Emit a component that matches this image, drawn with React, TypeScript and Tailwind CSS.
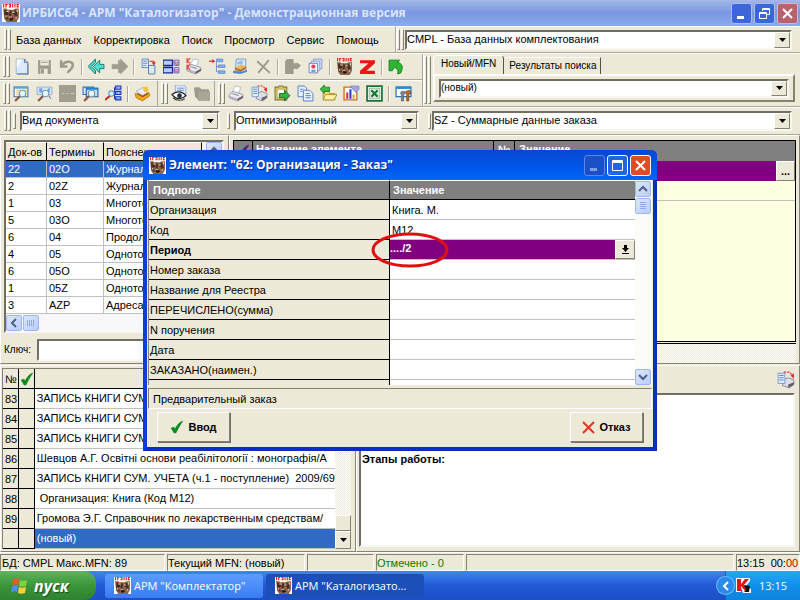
import React from "react";

const raised = "border border-t-white border-l-white border-r-[#848270] border-b-[#848270]";
const sunken = "border border-t-[#848270] border-l-[#848270] border-r-white border-b-white";
const sunkenDeep =
  "border-2 border-t-[#716f64] border-l-[#716f64] border-r-[#f8f7f0] border-b-[#f8f7f0]";
const hatch =
  "bg-[#f6f4ea] bg-[repeating-conic-gradient(#ffffff_0%_25%,#ece9d8_0%_50%)] bg-[size:2px_2px]";

type IconProps = { size?: number; children: React.ReactNode };

function Icon({ size = 18, children }: IconProps) {
  return (
    <svg width={size} height={size} viewBox="0 0 16 16" className="shrink-0" aria-hidden="true">
      {children}
    </svg>
  );
}

function FaceArt({ framed = true }: { framed?: boolean }) {
  return (
    <g>
      {framed && <rect width="16" height="16" fill="#fff" />}
      <path d="M1 4h3l1 1h5l2-1h3v8l-2 4H4l-2-3z" fill="#8f6449" />
      <path d="M2 5l3 1 1 3-2 1 2 4-3-1-1-4zM7 5l2 2-1 3 2 2-1 3H7l-1-4zM11 5l2 1 1 4-2 3-1-4z" fill="#4a3025" />
      <path d="M4 6h2v1H4zM9 7h2v1H9zM6 11h3v1H6zM12 11h1v2h-1zM3 10h1v2H3zM13 5h1v2h-1z" fill="#e8cfae" />
      <path d="M4 8h1v1H4zM10 8h1v1h-1zM7 13h3v1H7z" fill="#1c100c" />
      <path d="M1 0h1v3H1zM3 0h2v1H4v2H3zM6 0h2v3H6V2h1V1H6zM9 0h1v3H9zM11 0h1v3h-1zM13 0h2v1h-1v1h1v1h-2z" fill="#e31313" />
    </g>
  );
}

const magnifier = (
  <g>
    <path d="M7 10l-5 5" stroke="#8a5a42" strokeWidth="2" />
    <circle cx="9" cy="8" r="3" fill="#e2f6fc" stroke="#7f98aa" />
  </g>
);

const printerArt = (
  <g>
    <path d="M4 6l3-5 5 1-2 6z" fill="#fff" stroke="#a3aec0" strokeWidth=".7" />
    <path d="M1 9l4-3 9 3v3l-5 3-8-3z" fill="#e9e9ef" stroke="#8f8f9a" strokeWidth=".8" />
    <path d="M1 10l8 3 5-3v2l-5 3-8-3z" fill="#b4b4bf" />
    <path d="M9 13v2l5-3v-2z" fill="#60606a" />
    <path d="M4 8l6 2" stroke="#9a9aa6" />
  </g>
);

const art: Record<string, React.ReactNode> = {
  page: (
    <g>
      <path d="M3 1h8l3 3v11H3z" fill="#dbe9fb" stroke="#9aaccb" strokeWidth=".8" />
      <path d="M3.5 1.5h5l-5 8z" fill="#fff" />
      <path d="M11 1v3h3M14 5v10H4" fill="none" stroke="#4d6ea5" />
    </g>
  ),
  save: (
    <g>
      <path d="M2 2h12v13H2z" fill="#9d9a8c" />
      <path d="M4 2h8v5H4zM4 10h7v5H4z" fill="#ece9d8" />
      <path d="M5 4h6M5 11h2v3H5z" stroke="#9d9a8c" fill="#9d9a8c" />
    </g>
  ),
  undo: (
    <g fill="none" stroke="#9d9a8c" strokeWidth="2.4">
      <path d="M3 7c3-5 10-4 10 0 0 3-3 4-5 7" />
      <path d="M2 2v6h6" />
    </g>
  ),
  back: (
    <g fill="#4de0cf" stroke="#15766e" strokeWidth=".9">
      <path d="M5 8l6-6v4h4v4h-4v4z" />
      <path d="M0 8l7-7v3L3 8l4 4v3z" />
    </g>
  ),
  forward: (
    <path d="M16 8L9 1v2L7 2v4H1v4h6v4l2-1v2z" fill="#a09d90" stroke="#9d9a8c" strokeWidth=".6" />
  ),
  copyDoc: (
    <g>
      <path d="M2 1h6v8H2z" fill="#e7f1ff" stroke="#5078b4" strokeWidth=".8" />
      <path d="M3 3h4M3 5h4M3 7h3" stroke="#4d7cc6" strokeWidth=".8" />
      <path d="M8 7h6v8H8z" fill="#dce9fb" stroke="#587aae" strokeWidth=".9" />
      <path d="M9 3h4v1" stroke="#d02b20" fill="none" />
      <path d="M11 4h4l-2 3z" fill="#d02b20" />
    </g>
  ),
  windows: (
    <g>
      <path d="M0 2h9v5H0zM0 9h9v5H0z" fill="#b3d0ff" stroke="#1d24a8" strokeWidth="1.400" />
      <path d="M11 2h4v5h-4zM11 9h4v5h-4z" fill="#dfe2f8" stroke="#5152b9" strokeWidth=".8" />
      <path d="M9 4h2M9 12h2M12 4h2v2h-2zM12 11h2v2h-2z" stroke="#c8505c" fill="none" strokeWidth=".8" />
    </g>
  ),
  printK: (
    <g>
      {printerArt}
      <path d="M1 0v5M4 0L1 3l3 2M1 6v5M4 6L1 8l3 3" stroke="#e03434" fill="none" />
    </g>
  ),
  tree: (
    <g>
      <path d="M0 3h4" stroke="#d83535" strokeWidth="1.200" />
      <path d="M3 1l3 2-3 2z" fill="#d83535" />
      <path d="M7 4v9h2M7 8h2" stroke="#5f83c4" fill="none" strokeWidth=".8" />
      <path d="M7 1h6v2.500H7zM9 6.500h6V9H9zM9 12h6v2.500H9z" fill="#86b1f2" stroke="#4878cc" strokeWidth=".6" />
    </g>
  ),
  edit: (
    <g>
      <path d="M4 1h9v12H3z" fill="#d6eafc" stroke="#7391b8" strokeWidth=".8" />
      <path d="M5 4l5-2v4H5z" fill="#8fbdf0" />
      <path d="M3 9l6-3 4 2-5 3z" fill="#f0b35a" />
      <path d="M3 9l5 2 5-3v2l-5 3-5-2z" fill="#b8651f" />
      <path d="M1 12l8 1 5-2v2l-6 2-7-1z" fill="#4a87cf" />
    </g>
  ),
  cross: (
    <g stroke="#9d9a8c" strokeWidth="1.800">
      <path d="M2 3l12 11M13 2L3 14" />
    </g>
  ),
  greyDoc: <path d="M1 3l2-2h6v4h3V4l4 3-4 4v-1H9v5H1z" fill="#9d9a8c" />,
  cards: (
    <g>
      <path d="M6 1h8v9H6z" fill="#cfe0f8" stroke="#7d97c4" strokeWidth=".8" />
      <path d="M4 3h8v9H4z" fill="#dfeafb" stroke="#7d97c4" strokeWidth=".8" />
      <path d="M2 5h8v9H2z" fill="#fff" stroke="#5475ad" strokeWidth=".8" />
      <circle cx="6" cy="8" r="2" fill="#e0405e" />
      <path d="M4 11h4v2H4z" fill="#5a95da" />
    </g>
  ),
  face: <FaceArt framed={false} />,
  zed: <path d="M1 2h14v3L7 12h8v3H1v-3l8-7H1z" fill="#ee1414" />,
  greenArrow: (
    <path d="M1 2h10L9 4c4 1 6 4 3 10l-3 1c1-3 0-5-3-6l-2 3H1z" fill="#2fb536" stroke="#0d7a18" strokeWidth=".8" />
  ),
  search1: (
    <g>
      <path d="M1 2h13v9H1z" fill="#fff5d8" stroke="#3f75a9" />
      <path d="M1 2.500h13" stroke="#55a6d8" strokeWidth="2" />
      <path d="M3 5h10M3 7h10M3 9h10" stroke="#c5bd98" strokeWidth=".8" />
      {magnifier}
    </g>
  ),
  search2: (
    <g>
      <path d="M1 2h14v7H1z" fill="#dbe8fb" stroke="#8fa7cc" strokeWidth=".8" />
      <path d="M3 3h3v4H3zM11 3h2v4h-2z" fill="#6ea4e2" />
      <path d="M12 10l2 3" stroke="#6b7fa2" />
      {magnifier}
    </g>
  ),
  greyBox: (
    <g>
      <path d="M0 0h16v16H0z" fill="#a19e90" />
      <path d="M3 8h2M7 8h2M11 8h3" stroke="#cbc8b9" />
    </g>
  ),
  search3: (
    <g>
      <path d="M1 2h10v7H1z" fill="#d2e7fb" stroke="#3e6fb0" />
      <path d="M4 3h11v8H4z" fill="#c3defa" stroke="#285b9c" />
      <path d="M4 3.500h11" stroke="#1b86cb" strokeWidth="2" />
      {magnifier}
    </g>
  ),
  search4: (
    <g>
      <path d="M9 2v11h2M9 7h2" stroke="#202cae" fill="none" />
      <path d="M10 1h5v3h-5zM10 6h5v3h-5zM10 11h5v3h-5z" fill="#82b7ff" stroke="#1f35ba" />
      <path d="M5 10l-5 4" stroke="#c03d25" strokeWidth="2" />
      <circle cx="6" cy="8" r="2.500" fill="#d8f1fa" stroke="#6c9dc0" />
    </g>
  ),
  broom: (
    <g>
      <path d="M2 6l7-4 4 3-3 6z" fill="#e7eef9" stroke="#9aa5bd" strokeWidth=".7" />
      <circle cx="11" cy="4" r="2.500" fill="#f7c53a" />
      <path d="M1 8l7 2 6-3 1 3-7 5-6-3z" fill="#f1a51b" stroke="#b46a10" strokeWidth=".7" />
      <path d="M3 8l5 3 5-3" stroke="#8a4c12" fill="none" />
    </g>
  ),
  eye: (
    <g>
      <path d="M4 0h8l2 2v9H4z" fill="#d9e6fb" stroke="#8ba4d0" strokeWidth=".8" />
      <path d="M6 3h6M6 5h6" stroke="#5b87ca" strokeWidth=".8" />
      <path d="M1 9c4-4 10-3 13 1-4 4-9 4-13-1z" fill="#fff" stroke="#222" strokeWidth="1.200" />
      <circle cx="8" cy="10" r="2.200" fill="#1c3340" />
      <path d="M2 12c3 3 8 3 11 1" stroke="#444" fill="none" />
    </g>
  ),
  greyFolder: (
    <g fill="#9d9a8c">
      <path d="M0 3l1-1h4l2 2h7v2l1 1v7H4L1 11z" />
      <path d="M4 6h11v9H4z" fill="#a9a698" />
    </g>
  ),
  printer: printerArt,
  printDoc: (
    <g>
      <path d="M6 1h5l2 2" stroke="#db2b2b" fill="none" strokeDasharray="2 1" />
      <path d="M15 2v5l-3-3z" fill="#db2b2b" />
      <path d="M5 8l5-2 5 2v4l-4 3-6-2z" fill="#dedee6" stroke="#85858f" strokeWidth=".8" />
      <path d="M1 2h6v9H1z" fill="#e6f0ff" stroke="#6c92cc" strokeWidth=".8" />
      <path d="M2 4h4M2 6h4M2 8h4" stroke="#4a7ed2" strokeWidth=".8" />
      <path d="M10 12v3l5-3v-2z" fill="#60606a" />
    </g>
  ),
  exportDoc: (
    <g>
      <path d="M1 2h3l1-1h3l1 1h3v12H1z" fill="#e3c75c" stroke="#7c7a37" />
      <path d="M3 4h7v8H3z" fill="#fff" stroke="#8b8b5d" strokeWidth=".6" />
      <path d="M5 8h5V5l5 5-5 5v-3H5z" fill="#33b53a" stroke="#116318" strokeWidth=".8" />
    </g>
  ),
  copy: (
    <g fill="#e7f1ff" stroke="#5880bd" strokeWidth=".9">
      <path d="M1 1h6l2 2v8H1z" />
      <path d="M6 5h6l3 3v7H6z" />
      <path d="M8 8h4M8 10h5M8 12h5M3 4h3M3 6h2" />
    </g>
  ),
  importFolder: (
    <g>
      <path d="M3 6h5l1 2h5v6H3z" fill="#f4df82" stroke="#a58a22" strokeWidth=".8" />
      <path d="M5 9h11l-3 5H3z" fill="#fff0a6" stroke="#a58a22" strokeWidth=".8" />
      <path d="M0 4l4-4v2h5v4H4v2z" fill="#3cb940" stroke="#156f1c" strokeWidth=".7" />
    </g>
  ),
  chart: (
    <g>
      <path d="M1 2h12v12H1z" fill="#fff" stroke="#c0722f" strokeWidth="1.300" />
      <path d="M3 7h2v6H3z" fill="#e42d2d" />
      <path d="M6 4h2v9H6z" fill="#2741d7" />
      <path d="M9 9h2v4H9z" fill="#e9a322" />
      <path d="M7 1h8v3l-3 3-3-3z" fill="#a3a5e4" stroke="#6c6fc0" strokeWidth=".6" />
    </g>
  ),
  excel: (
    <g>
      <path d="M1 1h14v14H1z" fill="#fff" stroke="#1d7038" strokeWidth="1.600" />
      <path d="M3 3h10v10H3z" fill="#d5ead8" stroke="#6ea77a" strokeWidth=".7" />
      <path d="M5 5l6 6M11 5l-6 6" stroke="#1b7436" strokeWidth="2" />
    </g>
  ),
  tools: (
    <g>
      <path d="M1 2h14v9H1z" fill="#fff" stroke="#2b79bd" strokeWidth="1.200" />
      <path d="M1 2.500h14" stroke="#2a8bd7" strokeWidth="2.400" />
      <path d="M6 6h3l1 2-2 1v6H6V9L5 8z" fill="#7e8792" stroke="#4b535d" strokeWidth=".6" />
      <path d="M10 6l4-1 1 3-2 1v6h-2V9z" fill="#c4692d" stroke="#5f3a24" strokeWidth=".6" />
    </g>
  ),
};

function ToolButton({ name, label }: { name: string; label: string }) {
  return (
    <button type="button" aria-label={label} className="flex h-6 w-[23px] shrink-0 items-center justify-center">
      <Icon size={17}>{art[name]}</Icon>
    </button>
  );
}

function Separator() {
  return <span className="mx-[2px] h-4 w-[2px] shrink-0 border-l border-l-[#aca899] border-r border-r-white" />;
}

function Grip({ single = false }: { single?: boolean }) {
  return (
    <span className="flex shrink-0 gap-px self-stretch py-[2px]">
      <span className={`w-[3px] ${raised}`} />
      {!single && <span className={`w-[3px] ${raised}`} />}
    </span>
  );
}

function Tools({ items }: { items: string[][] }) {
  return (
    <>
      {items.map(([name, label], i) =>
        name === "|" ? <Separator key={i} /> : <ToolButton key={i} name={name} label={label} />
      )}
    </>
  );
}

function Combo({ label, value, small = false }: { label: string; value: string; small?: boolean }) {
  return (
    <div className={`relative min-w-0 flex-1 bg-white ${sunkenDeep} ${small ? "h-[19px] text-[10px]" : "h-5 text-[11px]"}`}>
      <select
        aria-label={label}
        className="block h-full w-full appearance-none bg-transparent pr-5 leading-none outline-none"
      >
        <option>{value}</option>
      </select>
      <span
        className={`pointer-events-none absolute inset-y-0 right-0 flex w-4 items-center justify-center bg-[#ece9d8] ${raised}`}
      >
        <svg width="7" height="4" aria-hidden="true">
          <path d="M0 0h7L3.500 4z" />
        </svg>
      </span>
    </div>
  );
}

function Check({ color = "#0c8a1c" }: { color?: string }) {
  return (
    <svg width="14" height="14" viewBox="0 0 14 14" className="shrink-0" aria-hidden="true">
      <path d="M1 8l3-1 1 2c2-4 4-7 8-8-3 4-5 8-7 12H4z" fill={color} stroke={color} strokeWidth=".4" />
    </svg>
  );
}

const rowTools1 = [
  ["page", "Новая запись"], ["save", "Сохранить"], ["undo", "Отменить"], ["|", ""],
  ["back", "Назад"], ["forward", "Вперёд"], ["|", ""],
  ["copyDoc", "Копировать запись"], ["windows", "Вид"], ["printK", "Печать карточек"], ["tree", "Структура"],
  ["edit", "Редактировать"], ["cross", "Удалить"], ["|", ""],
  ["greyDoc", "Экспорт"], ["cards", "Карточки"], ["|", ""],
  ["face", "ИРБИС"], ["zed", "Z39.50"], ["|", ""], ["greenArrow", "Выход"],
];
const rowTools2 = [
  ["search1", "Поиск"], ["search2", "Последовательный поиск"], ["greyBox", "Комплексный поиск"],
  ["search3", "Поиск в окне"], ["search4", "Поиск по дереву"], ["|", ""], ["broom", "Очистить"],
];
const rowTools3 = [["eye", "Просмотр"], ["greyFolder", "Папка"]];
const rowTools4 = [
  ["printer", "Печать"], ["printDoc", "Печать документа"], ["exportDoc", "Экспорт"], ["copy", "Копировать"],
  ["importFolder", "Импорт"], ["chart", "Статистика"], ["excel", "Таблица"], ["|", ""], ["tools", "Настройка"],
];

const terms = [
  ["22", "02O", "Журнал"], ["2", "02Z", "Журнал"], ["1", "03", "Многотомник"], ["5", "03O", "Многотомник"],
  ["6", "04", "Продолжающееся"], ["4", "05", "Однотомник"], ["6", "05O", "Однотомник"],
  ["1", "05Z", "Однотомник"], ["3", "AZP", "Адреса"],
];

const records = [
  ["83", "ЗАПИСЬ КНИГИ СУМ. УЧЕТА"],
  ["84", "ЗАПИСЬ КНИГИ СУМ. УЧЕТА"],
  ["85", "ЗАПИСЬ КНИГИ СУМ. УЧЕТА"],
  ["86", "Шевцов А.Г. Освітні основи реабілітології : монографія/А"],
  ["87", "ЗАПИСЬ КНИГИ СУМ. УЧЕТА (ч.1 - поступление)  2009/69"],
  ["88", " Организация: Книга (Код М12)"],
  ["89", "Громова Э.Г. Справочник по лекарственным средствам/"],
  ["", "(новый)"],
];

const fields = [
  ["Организация", "Книга. М."], ["Код", "М12"], ["Период", "..../2"], ["Номер заказа", ""],
  ["Название для Реестра", ""], ["ПЕРЕЧИСЛЕНО(сумма)", ""], ["N поручения", ""], ["Дата", ""],
  ["ЗАКАЗАНО(наимен.)", ""],
];

const winButton = "flex h-[21px] w-[21px] items-center justify-center rounded-[3px] border";

function TitleBar() {
  return (
    <header className="flex h-[26px] shrink-0 items-center gap-[2px] bg-linear-to-b from-[#a3b7e8] via-[#7b97e0] to-[#8aabee] px-[2px]">
      <Icon><FaceArt /></Icon>
      <h1 className="flex-1 font-['Open_Sans',sans-serif] text-[12px] leading-[18px] font-bold whitespace-nowrap text-[#dbe5fb]">
        ИРБИС64 - АРМ "Каталогизатор" - Демонстрационная версия
      </h1>
      <div className="flex gap-[2px]">
        <button type="button" aria-label="Свернуть" className={`${winButton} border-[#a9bdf0] bg-[#3d67d8]`}>
          <svg width="13" height="13" aria-hidden="true"><path d="M2 9h7v3H2z" fill="#fff" /></svg>
        </button>
        <button type="button" aria-label="Восстановить" className={`${winButton} border-[#a9bdf0] bg-[#3d67d8]`}>
          <svg width="13" height="13" fill="none" stroke="#fff" aria-hidden="true">
            <path d="M4.500 4V1.500h7v6H9M1.500 5.500h7v6h-7zM4 2.500h7M1 6.500h7" />
          </svg>
        </button>
        <button type="button" aria-label="Закрыть" className={`${winButton} border-[#d9b3c8] bg-[#b8616f]`}>
          <svg width="13" height="13" stroke="#fff" strokeWidth="2" aria-hidden="true"><path d="M2 2l9 9M11 2l-9 9" /></svg>
        </button>
      </div>
    </header>
  );
}

function MenuRow() {
  return (
    <div className="flex h-[27px] shrink-0 border-b border-b-[#aca899]">
      <nav className="flex w-[396px] shrink-0 items-center border-t border-r border-t-white border-r-[#aca899] pl-1">
        <Grip />
        <div className="flex gap-3 pl-[5px]">
          {["База данных", "Корректировка", "Поиск", "Просмотр", "Сервис", "Помощь"].map((m) => (
            <button type="button" key={m}>{m}</button>
          ))}
        </div>
      </nav>
      <div className="flex min-w-0 flex-1 items-center gap-px border-t border-l border-white pr-2">
        <Grip />
        <Combo label="База данных" value="CMPL - База данных комплектования" />
      </div>
    </div>
  );
}

function ToolRows() {
  return (
    <div className="flex h-[54px] shrink-0 border-t border-b border-t-white border-b-[#aca899]">
      <div className="flex w-[423px] shrink-0 flex-col border-r border-r-[#aca899]">
        <div className="flex h-[26px] items-center border-b border-b-[#aca899] pl-[3px]">
          <Grip />
          <Tools items={rowTools1} />
        </div>
        <div className="flex h-[26px] items-center border-t border-t-white pl-[3px]">
          <Grip />
          <Tools items={rowTools2} />
          <span className="ml-[3px] flex self-stretch border-l border-l-[#aca899] pl-[3px]"><Grip /></span>
          <Tools items={rowTools3} />
          <span className="flex self-stretch border-l border-l-[#aca899] pl-[3px]"><Grip /></span>
          <Tools items={rowTools4} />
        </div>
      </div>
      <div className="flex min-w-0 flex-1 gap-[2px] border-l border-l-white pr-[5px]">
        <Grip />
        <div className="flex min-w-0 flex-1 flex-col text-[10px]">
          <div className="flex h-5 items-end" role="tablist">
            <button type="button" role="tab" aria-selected="true" className="h-[19px] rounded-t-sm border border-b-0 border-t-white border-r-[#55534a] border-l-white px-[7px] pb-[3px]">
              Новый/MFN
            </button>
            <button type="button" role="tab" aria-selected="false" className="h-[17px] border border-b-0 border-t-white border-r-[#55534a] border-l-transparent px-1">
              Результаты поиска
            </button>
          </div>
          <div className="flex h-7 items-center border-2 border-t-white border-r-[#848270] border-b-[#848270] border-l-white px-1">
            <Combo label="MFN" value="(новый)" small />
          </div>
        </div>
      </div>
    </div>
  );
}

function ComboRow() {
  return (
    <div className="flex h-7 shrink-0 items-center border-t border-b border-t-white border-b-[#aca899] pr-2 pb-px pl-1">
      <Grip />
      <span className="ml-[2px] flex h-5"><Grip single /></span>
      <div className="ml-1 flex w-[200px] shrink-0"><Combo label="Вид документа" value="Вид документа" /></div>
      <span className="mr-1 ml-[7px] flex h-5"><Grip single /></span>
      <div className="flex w-[185px] shrink-0"><Combo label="Формат" value="Оптимизированный" /></div>
      <span className="mr-px ml-[9px] flex h-5"><Grip single /></span>
      <Combo label="Рабочий лист" value="SZ - Суммарные данные заказа" />
    </div>
  );
}

function ScrollButton({ dir }: { dir: "up" | "down" | "left" | "grip" | "gripH" }) {
  const paths = {
    up: "M3 9l4-4 4 4",
    down: "M3 5l4 4 4-4",
    left: "M9 3L5 7l4 4",
    grip: "M4 3.500h6M4 5.500h6M4 7.500h6M4 9.500h6",
    gripH: "M3.500 4v6M5.500 4v6M7.500 4v6M9.500 4v6",
  };
  const isGrip = dir === "grip" || dir === "gripH";
  return (
    <span className="flex h-4 w-4 shrink-0 items-center justify-center rounded-[2px] border border-[#9db7ee] bg-linear-to-br from-[#dce6fe] to-[#b9cdfa]">
      <svg width="14" height="14" fill="none" stroke={isGrip ? "#8ea9ea" : "#4d6185"} strokeWidth={isGrip ? 1 : 2} aria-hidden="true">
        <path d={paths[dir]} />
      </svg>
    </span>
  );
}

const termHead = "border-t border-r border-b border-t-white border-r-black border-b-black p-0 pl-[2px] font-normal";

function TermsPanel() {
  return (
    <section className={`flex w-[229px] shrink-0 flex-col pt-1 pr-1 pb-[2px] pl-[3px] ${raised}`}>
      <div className={`flex bg-white ${sunkenDeep}`}>
        <div className="min-w-0 flex-1">
          <table className="w-full table-fixed border-separate border-spacing-0 text-left">
            <thead>
              <tr className="h-[19px] bg-[#ece9d8]">
                <th className={`w-[41px] whitespace-nowrap ${termHead}`}>Док-ов</th>
                <th className={`w-[57px] ${termHead}`}>Термины</th>
                <th className={termHead}>Пояснение</th>
              </tr>
            </thead>
            <tbody>
              {terms.map((t, i) => (
                <tr key={i} className={`h-[17px] ${i === 0 ? "bg-[#316ac5] text-white" : ""}`}>
                  {t.map((c, j) => (
                    <td key={j} className="truncate border-r border-b border-[#c0c0c0] p-0 pl-[2px]">{c}</td>
                  ))}
                </tr>
              ))}
            </tbody>
          </table>
          <div className="flex h-[17px] items-center gap-px bg-[#f8f8fb]">
            <ScrollButton dir="left" />
            <ScrollButton dir="gripH" />
          </div>
        </div>
        <div className="w-5 bg-[#f4f3ee] pl-1"><ScrollButton dir="up" /></div>
      </div>
      <div className="mt-[6px] flex items-center gap-1">
        <label htmlFor="key" className="w-[29px] shrink-0 text-[10px]">Ключ:</label>
        <input id="key" className={`h-[22px] min-w-0 flex-1 bg-white px-1 ${sunkenDeep}`} />
      </div>
    </section>
  );
}

function ElementsPanel() {
  return (
    <section className={`flex min-w-0 flex-1 flex-col pt-1 pr-[3px] pl-[3px] ${raised}`}>
      <div className="border border-black bg-[#ffffe1]">
        <div className="flex h-5 bg-[#808080] font-bold text-white">
          <span className="flex w-[19px] items-center justify-center border-r border-black"><Check color="#800080" /></span>
          <span className="w-[241px] border-r border-black pt-px pl-[3px]">Название элемента</span>
          <span className="w-[21px] border-r border-black pt-px pl-1">№</span>
          <span className="flex-1 pt-px pl-1">Значение</span>
        </div>
        <div className="flex h-5 justify-end bg-[#800080]">
          <button type="button" aria-label="Открыть элемент" className={`w-[19px] bg-[#ece9d8] font-bold ${raised}`}>...</button>
        </div>
        <div className="h-5 border-b border-[#c0c0c0]" />
        <div className="h-[140px]" />
      </div>
      <div className="mt-px border-t border-black" />
      <div className={`min-h-0 flex-1 ${hatch}`} />
    </section>
  );
}

function RecordsPanel() {
  return (
    <section className={`flex w-[356px] shrink-0 flex-col ${raised}`}>
      <div className="mt-[2px] mr-1 ml-px flex border-t border-l border-[#848270]">
        <table className="min-w-0 flex-1 table-fixed border-separate border-spacing-0 bg-white text-left">
          <thead>
            <tr className="h-5 bg-[#ece9d8]">
              <th className="w-[17px] border-r border-b border-black p-0 pl-[2px] font-normal">№</th>
              <th className="w-[17px] border-r border-b border-black p-0 pl-px"><Check /></th>
              <th aria-label="Запись" className="w-[298px] border-b border-black p-0" />
            </tr>
          </thead>
          <tbody>
            {records.map(([n, text], i) => (
              <tr key={i} className="h-5">
                <td className="border-r border-b border-black bg-[#ece9d8] p-0 pl-[2px]">{n}</td>
                <td className="border-r border-b border-black bg-[#ece9d8] p-0" />
                <td className={`overflow-hidden border-b border-[#c0c0c0] p-0 pb-px pl-[2px] whitespace-pre ${n ? "" : "bg-[#316ac5] text-white"}`}>{text}</td>
              </tr>
            ))}
          </tbody>
        </table>
        <div className={`flex w-4 shrink-0 flex-col justify-end ${hatch}`}>
          <span className={`h-4 bg-[#ece9d8] ${raised}`} />
          <button type="button" aria-label="Прокрутить вниз" className={`flex h-[18px] items-center justify-center bg-[#ece9d8] ${raised}`}>
            <svg width="7" height="4" aria-hidden="true"><path d="M0 0h7L3.500 4z" /></svg>
          </button>
        </div>
      </div>
    </section>
  );
}

function StagesPanel() {
  return (
    <section className={`flex min-w-0 flex-1 flex-col ${raised}`}>
      <div className="flex h-[27px] shrink-0 items-center justify-end pr-[4px]">
        <button type="button" aria-label="Печать"><Icon>{art.printDoc}</Icon></button>
      </div>
      <div className={`mx-[2px] mr-1 mb-1 flex-1 bg-white pt-[57px] pl-px font-bold ${sunkenDeep}`}>Этапы работы:</div>
    </section>
  );
}

function Dialog() {
  return (
    <div
      role="dialog"
      aria-labelledby="dialog-title"
      className="absolute top-[150px] left-[143px] w-[514px] rounded-t-md border-4 border-t-0 border-[#0a3fd2] border-r-[#0a2fb8] border-b-[#0a2fb8] bg-[#ece9d8]"
    >
      <div className="-mx-1 flex h-[30px] items-center gap-[3px] rounded-t-md bg-linear-to-b from-[#0a46d0] via-[#0054e8] to-[#0466fc] pr-[6px] pl-[6px]">
        <Icon size={17}><FaceArt /></Icon>
        <h2 id="dialog-title" className="flex-1 font-['Open_Sans',sans-serif] text-[12px] leading-[18px] font-bold text-white [text-shadow:1px_1px_0_#0a2a80]">
          Элемент: "62: Организация - Заказ"
        </h2>
        <div className="flex gap-[2px]">
          <button type="button" aria-label="Свернуть" className={`${winButton} border-[#5d86ea] bg-[#1c50c8]`}>
            <svg width="13" height="13" aria-hidden="true"><path d="M2 9h7v3H2z" fill="#7f9fe6" /></svg>
          </button>
          <button type="button" aria-label="Развернуть" className={`${winButton} border-white bg-[#2563e4]`}>
            <svg width="13" height="13" fill="none" stroke="#fff" aria-hidden="true"><path d="M1.500 1.500h10v10h-10zM1 2.500h11M1 3.500h11" /></svg>
          </button>
          <button type="button" aria-label="Закрыть" className={`${winButton} border-white bg-[#e04b26]`}>
            <svg width="13" height="13" stroke="#fff" strokeWidth="2" aria-hidden="true"><path d="M2 2l9 9M11 2l-9 9" /></svg>
          </button>
        </div>
      </div>
      <div className="mx-px flex h-[205px] overflow-hidden border-l border-[#848270] bg-white">
        <table className="min-w-0 flex-1 table-fixed self-start border-separate border-spacing-0 text-left">
          <thead>
            <tr className="h-5 bg-[#808080] text-white">
              <th className="w-[241px] border-t border-r border-b border-t-white border-r-black border-b-black p-0 pl-1">Подполе</th>
              <th className="border-t border-b border-t-white border-b-black p-0 pl-[3px]">Значение</th>
            </tr>
          </thead>
          <tbody>
            {fields.map(([name, value]) => {
              const active = name === "Период";
              return (
                <tr key={name} className="h-5">
                  <th className={`border-r border-b border-black bg-[#ece9d8] p-0 pl-px ${active ? "font-bold" : "font-normal"}`}>{name}</th>
                  <td className={`border-b border-[#c0c0c0] p-0 ${active ? "bg-[#800080] text-white" : "pl-[2px]"}`}>
                    {active ? (
                      <div className="flex h-[19px]">
                        <input aria-label={name} defaultValue={value} className="h-[15px] min-w-0 flex-1 bg-transparent font-bold outline-none" />
                        <button type="button" aria-label="Выбрать" className={`flex w-5 items-center justify-center bg-[#ece9d8] ${raised}`}>
                          <svg width="9" height="10" aria-hidden="true"><path d="M3 0h3v3h2L4.500 7 1 3h2zM1 8h7v1H1z" /></svg>
                        </button>
                      </div>
                    ) : value}
                  </td>
                </tr>
              );
            })}
            <tr className="h-5">
              <td className="border-r border-black bg-[#ece9d8] p-0" />
              <td className="p-0" />
            </tr>
          </tbody>
        </table>
        <div className="flex w-[17px] shrink-0 flex-col gap-px bg-[#fbfbf8] pt-px pr-px">
          <ScrollButton dir="up" />
          <ScrollButton dir="grip" />
          <span className="mt-auto"><ScrollButton dir="down" /></span>
        </div>
      </div>
      <div className={`mx-px mt-[3px] flex h-[21px] items-center pl-[4px] ${sunken}`}>Предварительный заказ</div>
      <div className="flex justify-between pt-[3px] pr-[10px] pb-[5px] pl-[10px] text-[11px] font-bold">
        <button type="button" className={`flex h-[30px] w-[73px] items-center justify-center gap-1 ${raised} shadow-[1px_1px_0_#716f64]`}>
          <Check />Ввод
        </button>
        <button type="button" className={`flex h-[30px] w-[73px] items-center justify-center gap-1 ${raised} shadow-[1px_1px_0_#716f64]`}>
          <svg width="13" height="13" stroke="#d8391d" strokeWidth="2" aria-hidden="true"><path d="M1 1l11 11M12 1L1 12" /></svg>
          Отказ
        </button>
      </div>
      <svg className="pointer-events-none absolute top-[81px] left-[223px]" width="80" height="38" aria-hidden="true">
        <ellipse cx="40" cy="19" rx="37" ry="16" fill="none" stroke="#e01010" strokeWidth="3" />
      </svg>
    </div>
  );
}

function StatusBar() {
  const cell = `h-full shrink-0 overflow-hidden whitespace-nowrap leading-4 ${sunken}`;
  return (
    <footer className="flex h-[19px] shrink-0 gap-[2px] border-t border-white pt-px">
      <span className={`${cell} w-[165px] pl-px`}>БД: CMPL Макс.MFN: 89</span>
      <span className={`${cell} w-[138px]`}>Текущий MFN: (новый)</span>
      <span className={`${cell} w-[67px]`} />
      <span className={`${cell} w-[88px] text-[#008000]`}>Отмечено - 0</span>
      <span className={`${cell} min-w-0 flex-1`} />
      <span className={`${cell} w-[64px] whitespace-pre`}>13:15  00:<b className="font-normal text-[#c00000]">00</b></span>
    </footer>
  );
}

function Taskbar() {
  return (
    <div className="flex h-[29px] shrink-0 items-stretch bg-linear-to-b from-[#3f86f0] via-[#2359d6] to-[#1d4fc4] text-white">
      <button
        type="button"
        className="flex w-24 items-center gap-[5px] rounded-r-xl bg-linear-to-b from-[#5fb35c] via-[#3a9639] to-[#2f8130] pl-[11px] font-['Open_Sans',sans-serif] text-[16px] font-bold italic [text-shadow:1px_1px_1px_#1c4d1c]"
      >
        <svg width="18" height="18" viewBox="0 0 18 18" aria-hidden="true">
          <path d="M2 3c2-2 4-2 6-1L7 8C5 7 3 7 1 9z" fill="#f2562a" />
          <path d="M9 3c2 1 4 1 7 0l-1 6c-3 1-5 1-7 0z" fill="#7fd13b" />
          <path d="M1 10c2-2 4-2 6-1l-1 6c-2-1-4-1-6 1z" fill="#4f8df2" />
          <path d="M8 10c2 1 4 1 7 0l-1 6c-3 1-5 1-7 0z" fill="#fbcf3b" />
        </svg>
        пуск
      </button>
      <div className="flex flex-1 items-center gap-[3px] pl-[9px] font-['Open_Sans',sans-serif] text-[11px]">
        <button type="button" className="flex h-6 w-[158px] items-center gap-[3px] rounded-[3px] bg-linear-to-b from-[#5c9bff] to-[#3a7df2] pl-[9px]">
          <Icon size={17}><FaceArt /></Icon>АРМ "Комплектатор"
        </button>
        <button type="button" className="flex h-6 w-[158px] items-center gap-[3px] rounded-[3px] bg-[#1c4fb8] pl-[9px]">
          <Icon size={17}><FaceArt /></Icon>АРМ "Каталогизато...
        </button>
      </div>
      <div className="relative flex w-[75px] items-center gap-2 border-l border-[#0c5fc4] bg-linear-to-b from-[#23a7f5] via-[#1190ea] to-[#0f83dc] pl-[10px] font-['Open_Sans',sans-serif] text-[11px]">
        <button type="button" aria-label="Показать значки" className="absolute top-[6px] -left-[9px] flex h-[17px] w-[17px] items-center justify-center rounded-full bg-[#2a8cea] ring-1 ring-[#6fb8f7]">
          <svg width="8" height="10" fill="none" stroke="#fff" strokeWidth="2" aria-hidden="true"><path d="M6 1L2 5l4 4" /></svg>
        </button>
        <svg width="15" height="15" viewBox="0 0 15 15" aria-hidden="true">
          <path d="M0 0h14v3l-4 5 5 3v4H7L5 9v5H0z" fill="#fff" />
          <path d="M1 1h4v5l4-5h4L8 7l4 6H9L5 8v5H1z" fill="#e01515" />
          <path d="M8 7l6 1-1 6H8l2-2z" fill="#111" />
        </svg>
        <time>13:15</time>
      </div>
    </div>
  );
}

export default function App() {
  return (
    <div className="relative flex h-screen flex-col overflow-hidden bg-[#ece9d8] font-['Liberation_Sans',Arial,sans-serif] text-[11px] leading-[14px] text-black">
      <TitleBar />
      <MenuRow />
      <ToolRows />
      <ComboRow />
      <main className="flex min-h-0 flex-1 flex-col">
        <div className="flex h-[229px] shrink-0">
          <TermsPanel />
          <ElementsPanel />
        </div>
        <div className="flex min-h-0 flex-1 pt-px">
          <RecordsPanel />
          <StagesPanel />
        </div>
      </main>
      <StatusBar />
      <Taskbar />
      <Dialog />
    </div>
  );
}
